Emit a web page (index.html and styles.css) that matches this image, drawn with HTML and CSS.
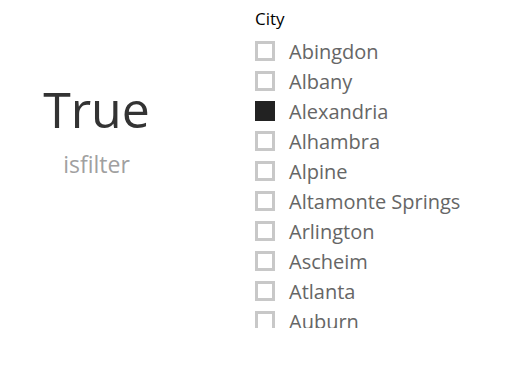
FILE: index.html
```html
<!DOCTYPE html>
<html lang="en">
<head>
  <meta charset="UTF-8">
  <title>isfilter</title>
  <link rel="stylesheet" href="styles.css">
</head>
<body>
  <div class="page">
    <div class="card">
      <div class="card-value">True</div>
      <div class="card-label">isfilter</div>
    </div>

    <div class="slicer">
      <div class="slicer-title">City</div>
      <div class="slicer-list">
        <div class="item"><span class="box"></span>Abingdon</div>
        <div class="item"><span class="box"></span>Albany</div>
        <div class="item"><span class="box checked"></span>Alexandria</div>
        <div class="item"><span class="box"></span>Alhambra</div>
        <div class="item"><span class="box"></span>Alpine</div>
        <div class="item"><span class="box"></span>Altamonte Springs</div>
        <div class="item"><span class="box"></span>Arlington</div>
        <div class="item"><span class="box"></span>Ascheim</div>
        <div class="item"><span class="box"></span>Atlanta</div>
        <div class="item"><span class="box"></span>Auburn</div>
      </div>
    </div>
  </div>
</body>
</html>
```

FILE: styles.css
```css
body {
  margin: 0;
  background: #fff;
  font-family: "Open Sans", Arial, sans-serif;
}

.page {
  display: flex;
  width: 515px;
  height: 370px;
}

.card {
  width: 193px;
  display: flex;
  flex-direction: column;
  align-items: center;
  padding-top: 78px;
}

.card-value {
  font-size: 50px;
  line-height: 62px;
  color: #333;
}

.card-label {
  font-size: 23px;
  line-height: 30px;
  color: #a0a0a0;
  margin-top: 9px;
}

.slicer {
  padding-left: 62px;
  padding-top: 6px;
}

.slicer-title {
  font-size: 17px;
  line-height: 26px;
  color: #000;
  margin-bottom: 4px;
}

.slicer-list {
  height: 292px;
  overflow: hidden;
}

.item {
  display: flex;
  align-items: center;
  height: 30px;
  font-size: 20px;
  color: #666;
}

.box {
  width: 14px;
  height: 14px;
  border: 3px solid #c8c8c8;
  margin-right: 14px;
  flex-shrink: 0;
}

.box.checked {
  background: #222;
  border-color: #222;
}
```
